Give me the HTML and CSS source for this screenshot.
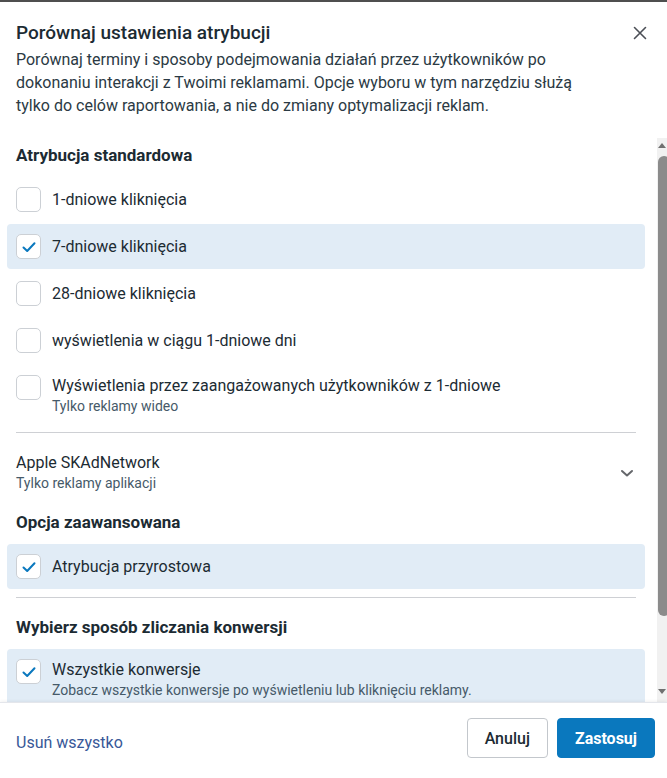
FILE: index.html
```html
<!DOCTYPE html>
<html lang="pl">
<head>
    <meta charset="UTF-8">
    <meta name="viewport" content="width=device-width, initial-scale=1.0">
    <title>Porównaj ustawienia atrybucji</title>
    <link rel="stylesheet" href="styles.css">
</head>
<body>
    <div class="dialog">
        <div class="dialog-header">
            <div class="title-row">
                <h1>Porównaj ustawienia atrybucji</h1>
                <button class="close" aria-label="Zamknij">
                    <svg width="14" height="14" viewBox="0 0 14 14"><path d="M1.5 1.5 L12.5 12.5 M12.5 1.5 L1.5 12.5" stroke="#4b4f56" stroke-width="1.6" stroke-linecap="round"/></svg>
                </button>
            </div>
            <p class="intro">Porównaj terminy i sposoby podejmowania działań przez użytkowników po dokonaniu interakcji z Twoimi reklamami. Opcje wyboru w tym narzędziu służą tylko do celów raportowania, a nie do zmiany optymalizacji reklam.</p>
        </div>

        <div class="body-wrap">
            <div class="dialog-body">
                <h2 class="section-title first">Atrybucja standardowa</h2>

                <label class="option">
                    <span class="box"></span>
                    <span class="label">1-dniowe kliknięcia</span>
                </label>
                <label class="option checked">
                    <span class="box"><svg width="16" height="16" viewBox="0 0 16 16"><path d="M2.5 8.5 L6.2 12 L13.5 4.2" fill="none" stroke="#0a78be" stroke-width="2" stroke-linecap="round" stroke-linejoin="round"/></svg></span>
                    <span class="label">7-dniowe kliknięcia</span>
                </label>
                <label class="option">
                    <span class="box"></span>
                    <span class="label">28-dniowe kliknięcia</span>
                </label>
                <label class="option">
                    <span class="box"></span>
                    <span class="label">wyświetlenia w ciągu 1-dniowe dni</span>
                </label>
                <label class="option multi">
                    <span class="box"></span>
                    <span class="label">Wyświetlenia przez zaangażowanych użytkowników z 1-dniowe
                        <small>Tylko reklamy wideo</small></span>
                </label>

                <hr class="divider">

                <div class="expander">
                    <div>
                        <div class="expander-title">Apple SKAdNetwork</div>
                        <small>Tylko reklamy aplikacji</small>
                    </div>
                    <svg width="14" height="10" viewBox="0 0 14 10"><path d="M2 3 L7 7.5 L12 3" fill="none" stroke="#65676b" stroke-width="2" stroke-linecap="round" stroke-linejoin="round"/></svg>
                </div>

                <h2 class="section-title">Opcja zaawansowana</h2>
                <label class="option checked">
                    <span class="box"><svg width="16" height="16" viewBox="0 0 16 16"><path d="M2.5 8.5 L6.2 12 L13.5 4.2" fill="none" stroke="#0a78be" stroke-width="2" stroke-linecap="round" stroke-linejoin="round"/></svg></span>
                    <span class="label">Atrybucja przyrostowa</span>
                </label>

                <hr class="divider second">

                <h2 class="section-title">Wybierz sposób zliczania konwersji</h2>
                <label class="option multi checked">
                    <span class="box"><svg width="16" height="16" viewBox="0 0 16 16"><path d="M2.5 8.5 L6.2 12 L13.5 4.2" fill="none" stroke="#0a78be" stroke-width="2" stroke-linecap="round" stroke-linejoin="round"/></svg></span>
                    <span class="label">Wszystkie konwersje
                        <small>Zobacz wszystkie konwersje po wyświetleniu lub kliknięciu reklamy.</small></span>
                </label>
            </div>

            <!-- scrollbar of the settings list -->
            <div class="scrollbar">
                <svg class="arrow" width="10" height="8" viewBox="0 0 10 8"><path d="M1 7 L5 2 L9 7 Z" fill="#707070"/></svg>
                <div class="thumb"></div>
                <svg class="arrow" width="10" height="8" viewBox="0 0 10 8"><path d="M1 1 L9 1 L5 6 Z" fill="#707070"/></svg>
            </div>
        </div>

        <div class="dialog-footer">
            <a href="#" class="clear-all">Usuń wszystko</a>
            <div class="actions">
                <button class="btn">Anuluj</button>
                <button class="btn primary">Zastosuj</button>
            </div>
        </div>
    </div>
</body>
</html>
```

FILE: styles.css
```css
body {
    margin: 0;
    background: #4f4f4f;
    font-family: Roboto, "Noto Sans", sans-serif;
    color: #1c2b33;
}
.dialog {
    margin-top: 2px;
    height: 776px;
    background: #fff;
    display: flex;
    flex-direction: column;
    overflow: hidden;
}
.dialog-header {
    padding: 20px 16px 21px;
}
.title-row {
    display: flex;
    justify-content: space-between;
    align-items: center;
}
h1 {
    margin: 0;
    font-size: 19px;
    line-height: 22px;
    font-weight: 500;
}
.close {
    background: none;
    border: none;
    padding: 0;
    margin-right: 4px;
    width: 14px;
    height: 14px;
    cursor: pointer;
}
.intro {
    margin: 4px 0 0;
    max-width: 580px;
    font-size: 16px;
    line-height: 23px;
    color: #2b3a44;
}

.body-wrap {
    flex: 1;
    display: flex;
    min-height: 0;
}
.dialog-body {
    flex: 1;
    overflow: hidden;
    padding: 7px 21px 0 16px;
}
.scrollbar {
    width: 10px;
    flex: none;
    background: #f1f1f1;
    display: flex;
    flex-direction: column;
    align-items: center;
    overflow: hidden;
    padding: 3px 0 6px;
}
.arrow {
    flex: none;
}
.thumb {
    flex: 1;
    width: 12px;
    margin: 7px 0 72px 3px;
    background: #8b8b8b;
    border-radius: 6px;
}

.section-title {
    margin: 19px 0 12px;
    font-size: 17px;
    line-height: 20px;
    font-weight: 700;
}
.section-title.first {
    margin-top: 0;
}
.option {
    display: flex;
    align-items: center;
    gap: 11px;
    margin: 0 -9px 2px;
    padding: 10px 9px;
    border-radius: 4px;
    font-size: 16px;
    line-height: 21px;
    cursor: pointer;
}
.option.multi {
    align-items: flex-start;
}
.option.checked {
    background: #e1ecf6;
}
.box {
    flex: none;
    width: 23px;
    height: 23px;
    border: 1px solid #ccd0d5;
    border-radius: 5px;
    background: #fff;
    display: flex;
    align-items: center;
    justify-content: center;
}
.label small,
.expander small {
    display: block;
    font-size: 14px;
    line-height: 20px;
    color: #465a69;
}
.divider {
    border: none;
    border-top: 1px solid #ced0d4;
    margin: 6px 0 0;
}
.divider.second {
    margin-top: 8px;
}
.expander {
    display: flex;
    justify-content: space-between;
    align-items: center;
    padding-top: 19px;
    padding-right: 2px;
}
.expander-title {
    font-size: 16px;
    line-height: 21px;
}

.dialog-footer {
    display: flex;
    justify-content: space-between;
    align-items: center;
    padding: 15px 12px 20px 16px;
    border-top: 1px solid #e4e6eb;
    box-shadow: 0 -1px 3px rgba(0, 0, 0, 0.06);
}
.clear-all {
    color: #385898;
    text-decoration: none;
    font-size: 16px;
    margin-top: 8px;
}
.actions {
    display: flex;
    gap: 9px;
}
.btn {
    height: 40px;
    padding: 0 17px;
    font-family: inherit;
    font-size: 16px;
    font-weight: 500;
    color: #1c2b33;
    background: #fff;
    border: 1px solid #c3c7cc;
    border-radius: 4px;
    cursor: pointer;
}
.btn.primary {
    background: #0a78be;
    border-color: #0a78be;
    color: #fff;
    font-weight: 700;
}
```
